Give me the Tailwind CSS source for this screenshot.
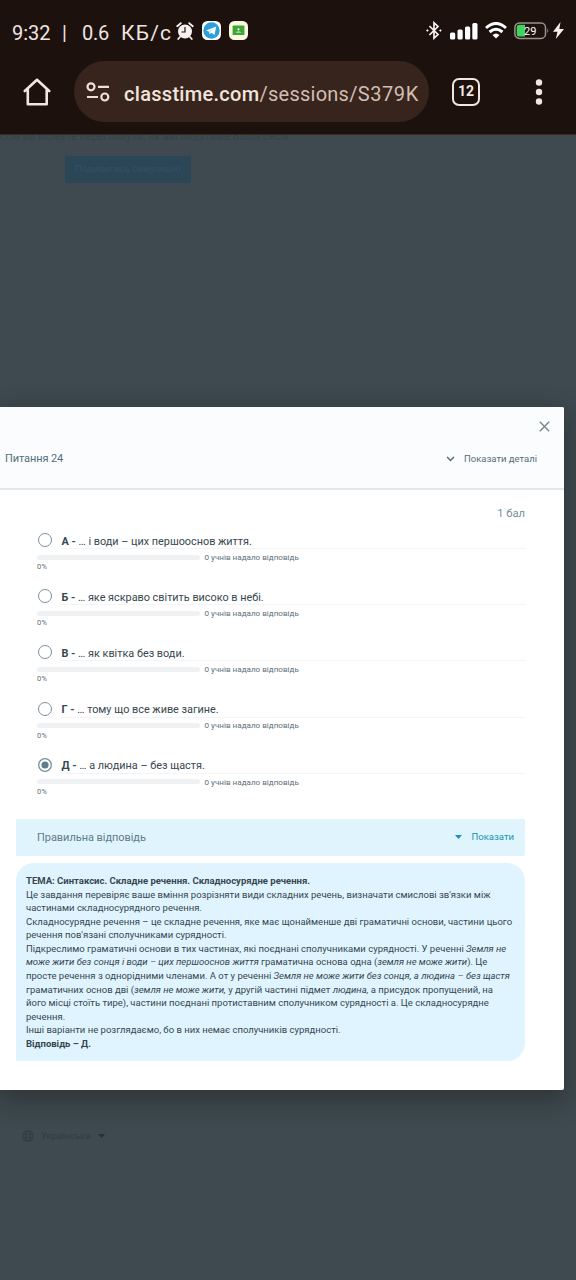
<!DOCTYPE html>
<html lang="uk">
<head>
<meta charset="utf-8">
<title>Classtime</title>
<script src="https://cdn.jsdelivr.net/npm/@tailwindcss/browser@4"></script>
</head>
<body class="w-[576px] h-[1280px] overflow-hidden bg-[#3e4a50] font-['Roboto',sans-serif] flex flex-col">
<header class="h-[135px] shrink-0 bg-[#1c110d] border-b border-[#3c2a22] flex flex-col">
  <div class="h-[61px] flex items-center justify-between pl-3 pr-[12px]">
    <div class="flex items-center text-[#efe5e1]">
      <span class="w-[162px] pt-1 flex items-center text-[20px] leading-[24px] whitespace-nowrap"><span class="w-[50px]">9:32</span><span class="w-[20px]">|</span><span class="w-[39px] tracking-[-0.3px]">0.6</span><span class="text-[21px] tracking-[1.2px]">КБ/с</span></span>
      <svg class="w-[18px] h-[18px] ml-[2px]" viewBox="0 0 18 18" fill="none"><circle cx="9" cy="9.5" r="7" fill="#f7f2ef"/><path d="M1.2 4.2 4.8 1.2M16.8 4.2 13.2 1.2M4 15l-1.8 2M14 15l1.8 2" stroke="#f7f2ef" stroke-width="1.8" stroke-linecap="round"/><path d="M9 5v5H5.5" stroke="#1c110d" stroke-width="1.2"/></svg>
      <svg class="w-[19px] h-[19px] ml-2" viewBox="0 0 19 19"><rect width="19" height="19" rx="5.5" fill="#fff"/><circle cx="9.5" cy="9.5" r="8.2" fill="#2b9fd9"/><path d="M4 9.500 14.200 5.400 12.500 14 9.300 11.700 7.700 13.200 7.200 10.700Z" fill="#fff"/><path d="M7.200 10.700 12 7.400 8.400 11.200 7.700 13.200" fill="#b9dff0"/></svg>
      <svg class="w-[19px] h-[19px] ml-2" viewBox="0 0 19 19"><rect width="19" height="19" rx="5.5" fill="#fbf9e4"/><rect x="3.600" y="4.600" width="11.800" height="9.400" rx=".6" fill="#3fa535"/><circle cx="9.500" cy="8.300" r="1.100" fill="#fff"/><path d="M6.500 11.500q3-2 6 0z" fill="#fff"/></svg>
    </div>
    <div class="flex items-center">
      <svg class="w-4 h-[19px]" viewBox="0 0 16 19" fill="none" stroke="#f7f2ef" stroke-width="1.7"><path d="M3.4 5 12 13.5 8 17.2V1.8L12 5.5 3.4 14"/><circle cx="1.400" cy="9.500" r=".7" fill="#f7f2ef" stroke-width="1"/><circle cx="14.400" cy="9.500" r=".7" fill="#f7f2ef" stroke-width="1"/></svg>
      <svg class="w-[28px] h-[18px] ml-2" viewBox="0 0 28 18" fill="#fff"><rect x="0" y="10.500" width="5.200" height="7" rx="1.500"/><rect x="7.500" y="7.500" width="5.200" height="10" rx="1.500"/><rect x="15" y="4.500" width="5.200" height="13" rx="1.500"/><rect x="22.300" y="1" width="5.200" height="16.500" rx="1.500"/></svg>
      <svg class="w-[22px] h-[17px] ml-[7px]" viewBox="0 0 22 17" fill="none" stroke="#fff" stroke-width="3"><path d="M1 6Q11-3 21 6"/><path d="M4.600 10Q11 4.500 17.400 10"/><path d="M7.500 13Q11 10 14.500 13L11 16.500Z" fill="#fff" stroke="none"/></svg>
      <svg class="w-[36px] h-[18px] ml-[7px]" viewBox="0 0 36 18"><rect x=".9" y=".9" width="30.600" height="15.500" rx="4.500" fill="none" stroke="#9b928e" stroke-width="1.500"/><path d="M5.500 2.700H11V14.600H5.500Q2.700 14.600 2.700 12V5.300Q2.700 2.700 5.500 2.700Z" fill="#43d25e"/><path d="M33.300 6.300q1.800 2.300 0 4.600z" fill="#9b928e"/><text x="10" y="13" font-family="Roboto" font-size="11" fill="#fff">29</text></svg>
      <svg class="w-[11px] h-[17px] ml-[3px]" viewBox="0 0 11 17"><path d="M7.500 0 0 9.800H4.500L2.800 17 11 6.900H6.300Z" fill="#f7f2ef"/></svg>
    </div>
  </div>
  <div class="h-[61px] flex items-center">
    <svg class="w-7 h-7 ml-[23px]" viewBox="0 0 28 28" fill="none" stroke="#f2e6e1" stroke-width="2.600" stroke-linejoin="round" stroke-linecap="round"><path d="M1.800 13 14 1.800 26.200 13M4.800 11V26.200H23.700V11"/></svg>
    <div class="w-[355px] h-[61px] ml-[23px] rounded-full bg-[#37251d] flex items-center pl-3">
      <svg class="w-6 h-5 shrink-0" viewBox="0 0 24 20" fill="none" stroke="#efdfd8" stroke-width="2.200"><circle cx="5" cy="4.800" r="3.500"/><path d="M12 4.800H23M1 15H12"/><circle cx="18.800" cy="15" r="3.500"/></svg>
      <div class="ml-[14px] whitespace-nowrap text-[20px] leading-7 font-medium text-[#f2e4dd] pt-1"><span class="tracking-[0.3px]">classtime.com</span><span class="text-[#d3bdb3] font-normal tracking-[0.250px]">/sessions/</span><span class="text-[#d3bdb3] font-normal tracking-[0.600px]">S379K</span></div>
    </div>
    <div class="ml-[23px] w-7 h-7 rounded-[7px] border-[2.500px] border-[#f2e6e1] text-[#f2e6e1] text-[14px] font-bold flex items-center justify-center">12</div>
    <svg class="ml-[55px] w-2 h-7" viewBox="0 0 8 28" fill="#f2e6e1"><circle cx="4" cy="4.500" r="3.200"/><circle cx="4" cy="14" r="3.200"/><circle cx="4" cy="23.500" r="3.200"/></svg>
  </div>
</header>

<section class="h-[272px] shrink-0 overflow-hidden">
  <p class="h-[9px] -mt-[5px] text-[10.500px] leading-[14px] text-[#34434b] whitespace-nowrap tracking-[0.220px]">сом ви можете переглянути, як виглядатиме Ваша сесія.</p>
  <div class="ml-[65px] mt-[17px] w-[126px] h-[27px] bg-[#2b4657] text-[#36505f] text-[9.600px] flex items-center justify-center">Подивитись симуляцію</div>
</section>

<main class="w-[564px] h-[683px] shrink-0 bg-white rounded-r-[2px] shadow-[0_8px_24px_4px_rgba(30,30,30,0.450)]">
  <div class="h-[83px] bg-[#fbfcfe] border-b-2 border-[#e3e6e9] rounded-tr-[2px] flex flex-col text-[#546e7a]">
    <div class="h-[38px] flex justify-end items-center pr-[14px]">
      <svg class="w-[11px] h-[11px]" viewBox="0 0 11 11" stroke="#78858b" stroke-width="1.400"><path d="M.8.8 10.200 10.200M10.200.8.8 10.200"/></svg>
    </div>
    <div class="h-[28px] flex items-center pl-[5px] pr-[27px]">
      <h1 class="text-[11px] tracking-[-0.100px] grow">Питання 24</h1>
      <svg class="w-[9px] h-[6px] mr-[9px]" viewBox="0 0 8 6" fill="none" stroke="#546e7a" stroke-width="1.500"><path d="M.6 1 4 4.500 7.400 1"/></svg>
      <span class="text-[9.500px]">Показати деталі</span>
    </div>
  </div>
  <div class="h-[43px] pt-[15px] pr-[39px] text-right text-[11.200px] leading-[17px] text-[#78909c]">1 бал</div>

  <div class="pl-[37px] pr-[38px] text-[#37474f]">
    <div class="h-[56.200px]">
      <div class="flex items-center h-[15px]"><i class="w-[14px] h-[14px] ml-px -mt-px rounded-full border-[1.500px] border-[#78909c]"></i><p class="ml-[9.500px] text-[10.850px] leading-[15px] pt-px whitespace-nowrap"><b>А -</b> … і води – цих першооснов життя.</p></div>
      <div class="ml-6 border-b border-[#f3f4f5]"></div>
      <div class="flex items-center h-[16px]"><div class="w-[163px] h-[5px] rounded-full bg-[#eff1f2]"></div><span class="ml-[4.500px] text-[8.100px] text-[#607078]">0 учнів надало відповідь</span></div>
      <div class="text-[7.500px] leading-[9px] -mt-[3px] tracking-[0.200px] text-[#607078]">0%</div>
    </div>
    <div class="h-[56.200px]">
      <div class="flex items-center h-[15px]"><i class="w-[14px] h-[14px] ml-px -mt-px rounded-full border-[1.500px] border-[#78909c]"></i><p class="ml-[9.500px] text-[10.850px] leading-[15px] pt-px whitespace-nowrap"><b>Б -</b> … яке яскраво світить високо в небі.</p></div>
      <div class="ml-6 border-b border-[#f3f4f5]"></div>
      <div class="flex items-center h-[16px]"><div class="w-[163px] h-[5px] rounded-full bg-[#eff1f2]"></div><span class="ml-[4.500px] text-[8.100px] text-[#607078]">0 учнів надало відповідь</span></div>
      <div class="text-[7.500px] leading-[9px] -mt-[3px] tracking-[0.200px] text-[#607078]">0%</div>
    </div>
    <div class="h-[56.200px]">
      <div class="flex items-center h-[15px]"><i class="w-[14px] h-[14px] ml-px -mt-px rounded-full border-[1.500px] border-[#78909c]"></i><p class="ml-[9.500px] text-[10.850px] leading-[15px] pt-px whitespace-nowrap"><b>В -</b> … як квітка без води.</p></div>
      <div class="ml-6 border-b border-[#f3f4f5]"></div>
      <div class="flex items-center h-[16px]"><div class="w-[163px] h-[5px] rounded-full bg-[#eff1f2]"></div><span class="ml-[4.500px] text-[8.100px] text-[#607078]">0 учнів надало відповідь</span></div>
      <div class="text-[7.500px] leading-[9px] -mt-[3px] tracking-[0.200px] text-[#607078]">0%</div>
    </div>
    <div class="h-[56.200px]">
      <div class="flex items-center h-[15px]"><i class="w-[14px] h-[14px] ml-px -mt-px rounded-full border-[1.500px] border-[#78909c]"></i><p class="ml-[9.500px] text-[10.850px] leading-[15px] pt-px whitespace-nowrap"><b>Г -</b> … тому що все живе загине.</p></div>
      <div class="ml-6 border-b border-[#f3f4f5]"></div>
      <div class="flex items-center h-[16px]"><div class="w-[163px] h-[5px] rounded-full bg-[#eff1f2]"></div><span class="ml-[4.500px] text-[8.100px] text-[#607078]">0 учнів надало відповідь</span></div>
      <div class="text-[7.500px] leading-[9px] -mt-[3px] tracking-[0.200px] text-[#607078]">0%</div>
    </div>
    <div class="h-[61.200px]">
      <div class="flex items-center h-[15px]"><svg class="w-[14px] h-[14px] ml-px" viewBox="0 0 14 14"><circle cx="7" cy="7" r="6.300" fill="none" stroke="#78909c" stroke-width="1.300"/><circle cx="7" cy="7" r="3.600" fill="#607d8b"/></svg><p class="ml-[9.500px] text-[10.850px] leading-[15px] pt-px whitespace-nowrap"><b>Д -</b> … а людина – без щастя.</p></div>
      <div class="ml-6 border-b border-[#f3f4f5]"></div>
      <div class="flex items-center h-[16px]"><div class="w-[163px] h-[5px] rounded-full bg-[#eff1f2]"></div><span class="ml-[4.500px] text-[8.100px] text-[#607078]">0 учнів надало відповідь</span></div>
      <div class="text-[7.500px] leading-[9px] -mt-[3px] tracking-[0.200px] text-[#607078]">0%</div>
    </div>
  </div>

  <div class="ml-4 w-[509px] h-[37px] bg-[#dff4fc] rounded-r-[2px] flex items-center pl-[21px] pr-[11px]">
    <span class="grow text-[11px] leading-[15px] pt-px tracking-[-0.050px] text-[#607d8b]">Правильна відповідь</span>
    <svg class="w-[7px] h-1 mr-[10px]" viewBox="0 0 7 4"><path d="M0 0H7L3.500 4Z" fill="#1495b5"/></svg>
    <span class="text-[9.500px] text-[#1495b5]">Показати</span>
  </div>
  <div class="ml-4 mt-[7px] w-[509px] h-[198px] bg-[#dff4fe] rounded-[18px] rounded-bl-none pl-[10px] pt-[11px] text-[9.500px] leading-[13.580px] text-[#37474f] whitespace-nowrap">
    <p class="font-bold">ТЕМА: Синтаксис. Складне речення. Складносурядне речення.</p>
    <p>Це завдання перевіряє ваше вміння розрізняти види складних речень, визначати смислові зв'язки між</p>
    <p>частинами складносурядного речення.</p>
    <p>Складносурядне речення – це складне речення, яке має щонайменше дві граматичні основи, частини цього</p>
    <p>речення пов'язані сполучниками сурядності.</p>
    <p>Підкреслимо граматичні основи в тих частинах, які поєднані сполучниками сурядності. У реченні <i>Земля не</i></p>
    <p><i>може жити без сонця і води – цих першооснов життя</i> граматична основа одна (<i>земля не може жити</i>). Це</p>
    <p>просте речення з однорідними членами. А от у реченні <i>Земля не може жити без сонця, а людина – без щастя</i></p>
    <p>граматичних основ дві (<i>земля не може жити,</i> у другій частині підмет <i>людина,</i> а присудок пропущений, на</p>
    <p>його місці стоїть тире), частини поєднані протиставним сполучником сурядності а. Це складносурядне</p>
    <p>речення.</p>
    <p>Інші варіанти не розглядаємо, бо в них немає сполучників сурядності.</p>
    <p class="font-bold">Відповідь – Д.</p>
  </div>
</main>

<footer class="pt-[38px] pl-[22px] flex items-center text-[#303c42] text-[9.500px] leading-4">
  <svg class="w-3 h-3 mr-[7px]" viewBox="0 0 12 12" fill="none" stroke="#303c42"><circle cx="6" cy="6" r="5.300"/><ellipse cx="6" cy="6" rx="2.400" ry="5.300"/><path d="M1 4.200H11M1 7.800H11"/></svg>
  <span>Українська</span>
  <svg class="w-[7px] h-1 ml-2" viewBox="0 0 7 4"><path d="M0 0H7L3.500 4Z" fill="#263238"/></svg>
</footer>
</body>
</html>
